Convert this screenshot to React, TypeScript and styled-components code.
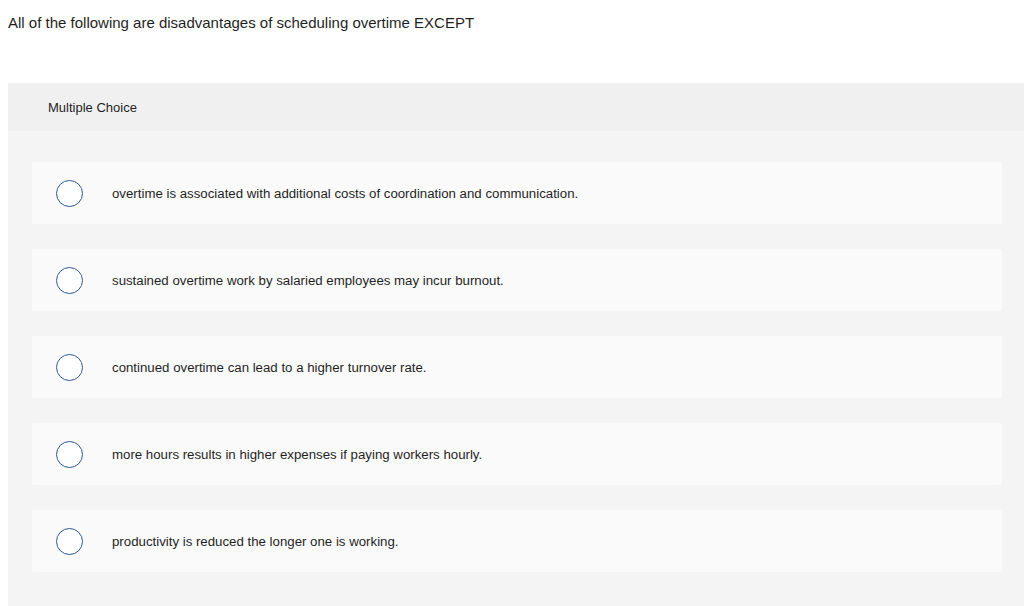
import React, { FC } from "react";
import styled, { createGlobalStyle } from "styled-components";

const GlobalStyle = createGlobalStyle`
  html, body {
    margin: 0;
    padding: 0;
    background: #fff;
  }
  body {
    padding-left: 8px;
    font-family: "Liberation Sans", Arial, sans-serif;
    color: #222;
  }
`;

const Prompt = styled.p`
  margin: 0;
  padding-top: 14px;
  height: 83px;
  box-sizing: border-box;
  font-size: 15px;
  line-height: 18px;
  color: #1f1f1f;
`;

const Panel = styled.section`
  background: #f4f4f4;
  padding-bottom: 34px;
`;

const PanelHeader = styled.div`
  background: #f0f0f0;
  height: 48px;
  padding-left: 40px;
  display: flex;
  align-items: center;
  font-size: 13px;
  color: #1f1f1f;
`;

const Options = styled.ul`
  list-style: none;
  margin: 0;
  padding: 31px 22px 0 24px;
  display: flex;
  flex-direction: column;
  gap: 25px;
`;

const Option = styled.li`
  height: 62px;
  background: #fafafa;
  border-radius: 3px;
  display: flex;
  align-items: center;
  padding-left: 24px;
`;

const Radio = styled.span`
  width: 25px;
  height: 25px;
  border: 1px solid #2c5a94;
  border-radius: 50%;
  background: #fff;
  flex-shrink: 0;
  margin-right: 29px;
`;

const Label = styled.span`
  font-size: 13.25px;
  color: #1f1f1f;
`;

const choices = [
  "overtime is associated with additional costs of coordination and communication.",
  "sustained overtime work by salaried employees may incur burnout.",
  "continued overtime can lead to a higher turnover rate.",
  "more hours results in higher expenses if paying workers hourly.",
  "productivity is reduced the longer one is working.",
];

const App: FC = () => {
  return (
    <>
      <GlobalStyle />
      <Prompt>All of the following are disadvantages of scheduling overtime EXCEPT</Prompt>
      <Panel>
        <PanelHeader>Multiple Choice</PanelHeader>
        <Options>
          {choices.map((c) => (
            <Option key={c}>
              <Radio />
              <Label>{c}</Label>
            </Option>
          ))}
        </Options>
      </Panel>
    </>
  );
};

export default App;
